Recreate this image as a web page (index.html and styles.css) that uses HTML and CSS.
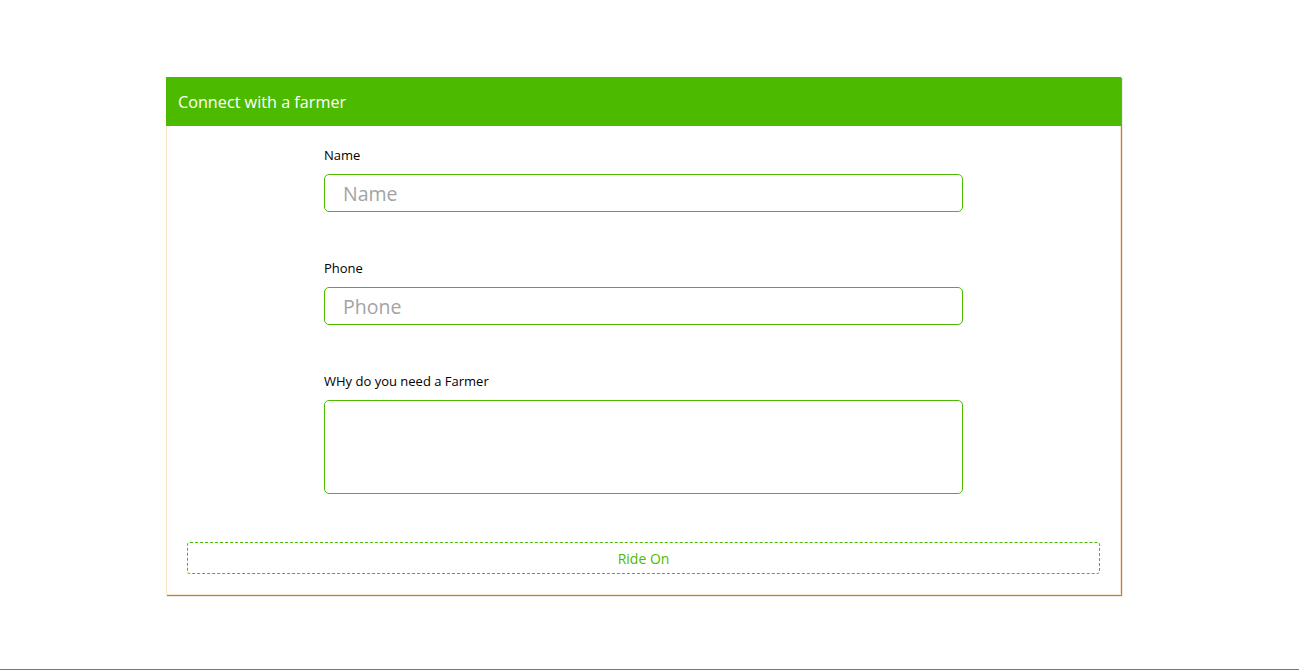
FILE: index.html
```html
<!DOCTYPE html>
<html>
<head>
<meta charset="utf-8">
<link rel="stylesheet" href="styles.css">
</head>
<body>
<div class="page">
  <div class="card">
    <div class="card-header">Connect with a farmer</div>
    <div class="card-body">
      <form class="form">
        <div class="field">
          <label class="label">Name</label>
          <input class="input" type="text" placeholder="Name">
        </div>
        <div class="field">
          <label class="label">Phone</label>
          <input class="input" type="text" placeholder="Phone">
        </div>
        <div class="field">
          <label class="label">WHy do you need a Farmer</label>
          <textarea class="textarea"></textarea>
        </div>
      </form>
      <button class="btn" type="button">Ride On</button>
    </div>
  </div>
</div>
<div class="footer-line"></div>
</body>
</html>
```
FILE: styles.css
```css
html, body {
  margin: 0;
  padding: 0;
  background: #fff;
  font-family: "Open Sans", "Noto Sans", sans-serif;
}
.page {
  height: 669px;
  padding-top: 77px;
  box-sizing: border-box;
}
.card {
  margin-left: 166px;
  width: 955px;
  background: #fff;
  box-shadow: 1px 1px 1px #8a8a8a;
}
.card-header {
  background: #4cbb00;
  color: #fff;
  height: 49px;
  display: flex;
  align-items: center;
  padding-left: 12px;
  font-size: 16.2px;
}
.card-body {
  border: 1px solid #fce5c8;
  border-top: none;
  padding: 20px 20px 20px 20px;
}
.form {
  width: 639px;
  margin: 0 auto;
  display: flex;
  flex-direction: column;
  gap: 47px;
}
.field {
  display: flex;
  flex-direction: column;
}
.label {
  font-size: 13px;
  color: #000;
  margin-bottom: 9px;
  line-height: 19px;
}
.input {
  height: 38px;
  box-sizing: border-box;
  border: 1px solid #4cbb00;
  border-radius: 5px;
  padding: 0 18px;
  font-family: inherit;
  font-size: 19.5px;
  color: #333;
  outline: none;
}
.input::placeholder {
  color: #a3a3a3;
}
.textarea {
  height: 94px;
  box-sizing: border-box;
  border: 1px solid #4cbb00;
  border-radius: 5px;
  resize: none;
  font-family: inherit;
  outline: none;
}
.btn {
  display: block;
  width: 100%;
  margin-top: 48px;
  height: 32px;
  background: #fff;
  border: 1px dashed #4cbb00;
  border-radius: 3px;
  color: #4cbb00;
  font-family: inherit;
  font-size: 14px;
}
.footer-line {
  height: 1px;
  background: #777;
}
```
